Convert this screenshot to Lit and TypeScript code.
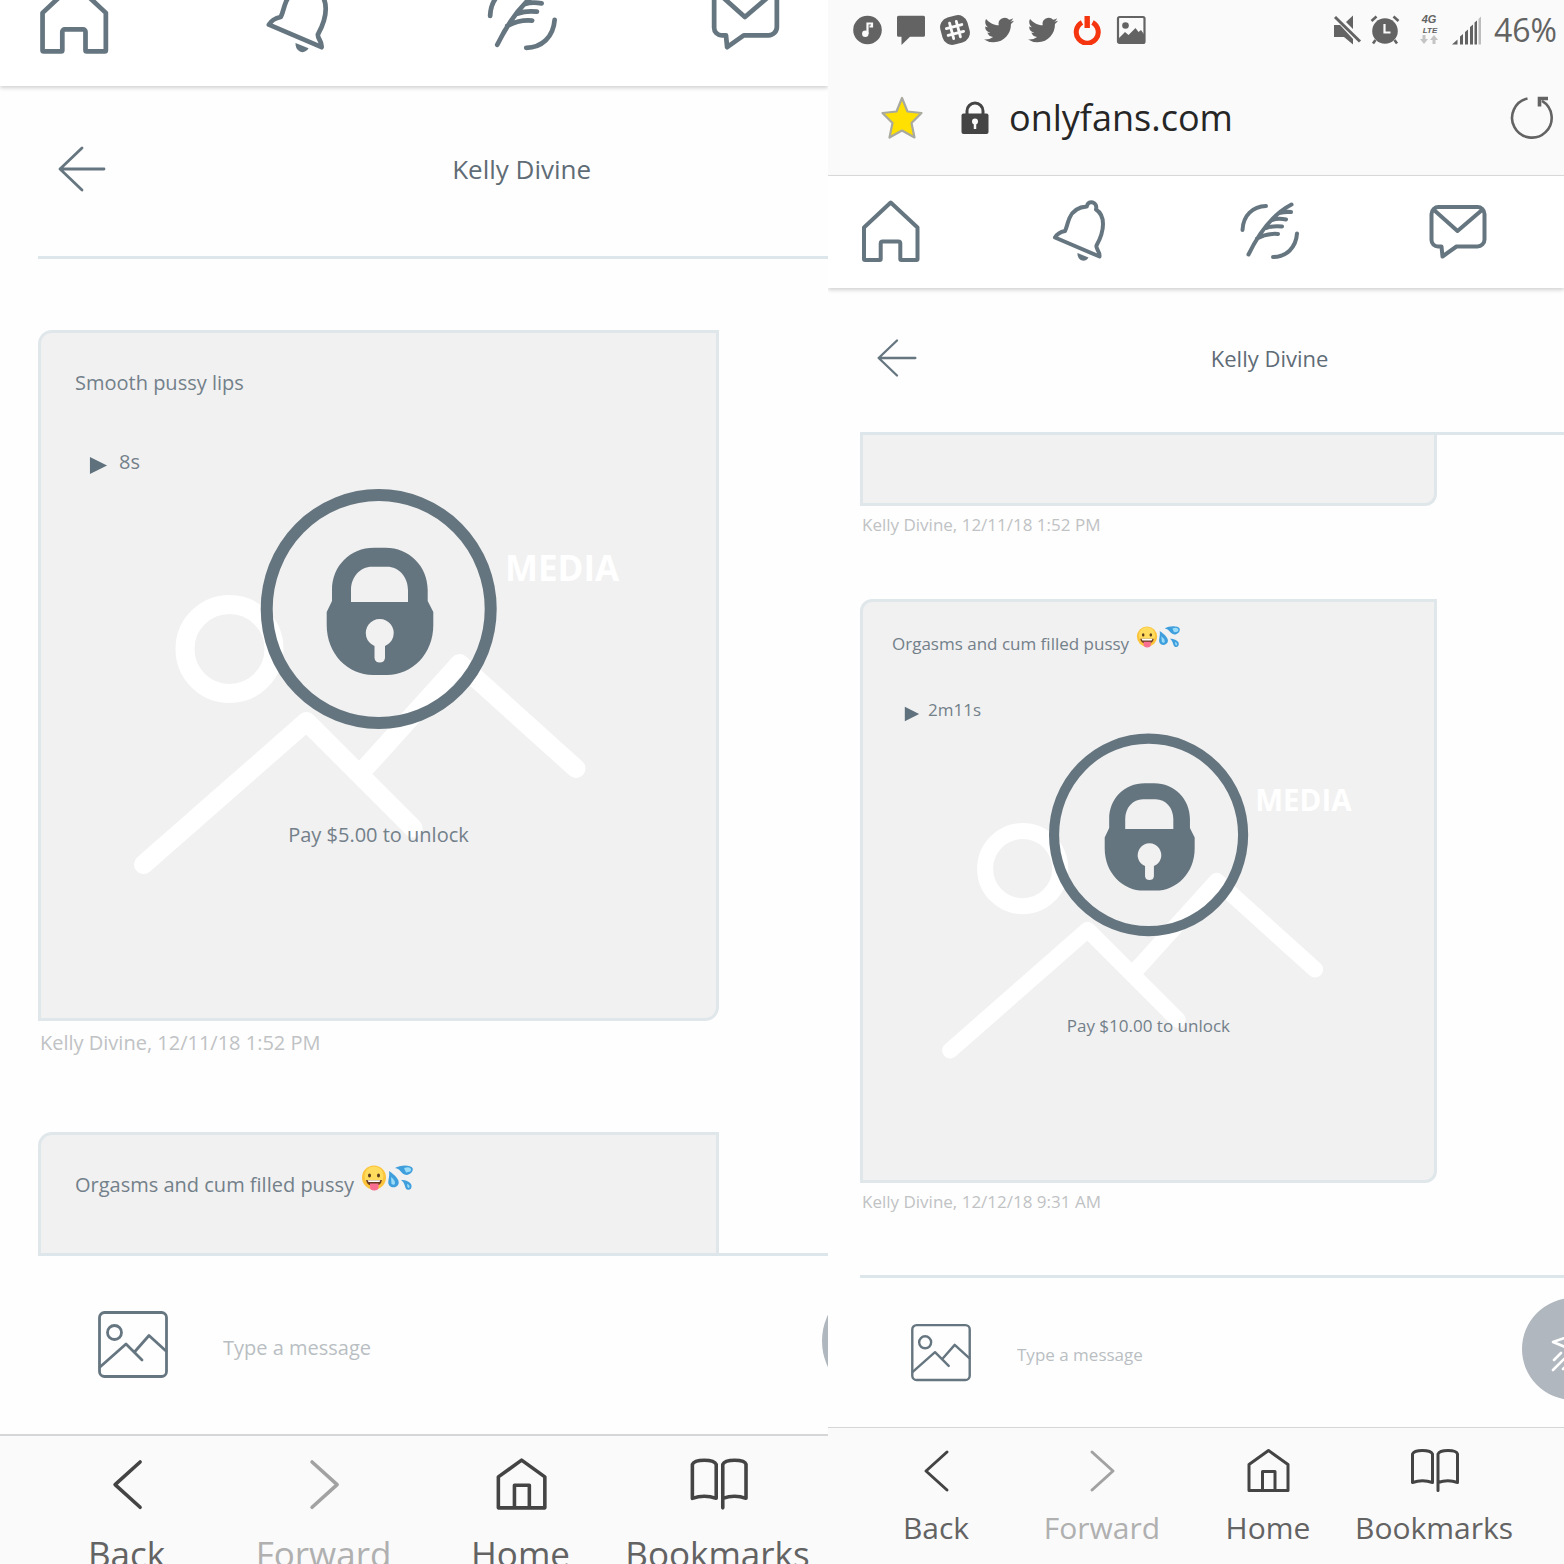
import { LitElement, html, svg, css, nothing } from "lit";
import { customElement, property } from "lit/decorators.js";
import { classMap } from "lit/directives/class-map.js";

interface Message {
  text?: string;
  emoji?: boolean;
  duration?: string;
  price?: string;
  sent?: string;
}

const LEFT: Message[] = [
  { text: "Smooth pussy lips", duration: "8s", price: "$5.00", sent: "Kelly Divine, 12/11/18 1:52 PM" },
  { text: "Orgasms and cum filled pussy", emoji: true },
];

const RIGHT: Message[] = [
  { sent: "Kelly Divine, 12/11/18 1:52 PM" },
  {
    text: "Orgasms and cum filled pussy",
    emoji: true,
    duration: "2m11s",
    price: "$10.00",
    sent: "Kelly Divine, 12/12/18 9:31 AM",
  },
];

const NAV = [
  {
    label: "Home",
    art: svg`<path d="M29.7 3.5 56.5 28.5V60a1 1 0 0 1-1 1H40.3a1 1 0 0 1-1-1V44.5a2 2 0 0 0-2-2H21.7a2 2 0 0 0-2 2V60a1 1 0 0 1-1 1H4a1 1 0 0 1-1-1V28.5Z"/>`,
  },
  {
    label: "Notifications",
    art: svg`<path d="M5 38.5 49.5 57.5C50 52 45.500 50 46.500 46.500 49 42 53 35 53 25 53 18 50 13 46 10.500 48 3 38 0 36.800 7.500 28 8 22.500 12 19.500 19 17 25 17 28 15 32 10 33 7 35 5 38.500Z"/><path class="solid" d="M27.500 54 38.500 58.500C35 64.500 27 61.500 27.500 54Z"/>`,
  },
  {
    label: "New post",
    art: svg`<path d="M27 7C14 7.500 4 16 3.500 31M52.500 5.500C34 15 21 32 9.500 55.500M52 13Q46 12.500 40 14M47 20.500Q39 19 33 21M43 27.500Q34 26.500 27 29M39 35Q28 34 18 39.500M58 34.500C57 49 47 58 34 58"/>`,
  },
  {
    label: "Messages",
    art: svg`<path d="M11 8H49a7 7 0 0 1 7.500 7V40.500a7 7 0 0 1-7 7H28.500L14.500 57.500 13.500 47.500H10a6.500 6.500 0 0 1-6.500-6.500V15a7 7 0 0 1 7.500-7ZM6 11 29.500 32 54 11"/>`,
  },
];

const TOOLS = [
  { label: "Back", off: false, art: svg`<path d="M37 5 16 24 37 43"/>` },
  { label: "Forward", off: true, art: svg`<path d="M16 5 37 24 16 43"/>` },
  {
    label: "Home",
    off: false,
    art: svg`<path d="M26.500 3.500 46 17.500V43.500H7V17.500ZM20.500 43.500V24.500H33V43.500"/>`,
  },
  {
    label: "Bookmarks",
    off: false,
    art: svg`<path d="M4.500 35.500V7Q6 3.500 14.500 3.500T24.500 7V35.500Q14.500 32 4.500 35.500ZM30 43.500V7Q31.500 3.500 40 3.500T49.500 7V35.500Q40 32 30 35.500"/>`,
  },
];

@customElement("chat-pane")
export class ChatPane extends LitElement {
  @property({ type: Boolean }) browser = false;
  @property({ attribute: false }) messages: Message[] = [];

  static styles = css`
    :host {
      display: flex;
      flex-direction: column;
      min-width: 0;
      height: 100vh;
      overflow: hidden;
      background: #fefefe;
      color: #73808a;
      font-family: "Open Sans", "Noto Sans", sans-serif;
      --page: 126%;
      --edge: 38px;
      --nav-h: 86px;
      --nav-pad: 0 47px 31px 39px;
      --nav-w: 71px;
      --nav-ih: 76px;
      --head-h: 170px;
      --arrow-x: 58px;
      --arrow: 48px;
      --title: 26px;
      --text: 20px;
      --line: 30px;
      --line-lg: 34px;
      --feed-top: 71px;
      --card-top: 33px;
      --card-x: 34px;
      --card-bottom: 138px;
      --round: 14px;
      --time-gap: 7px;
      --next: 74px;
      --play-x: 48px;
      --play-gap: 47px;
      --play: 19px;
      --play-space: 11px;
      --art: 500px;
      --pay: 30px;
      --emoji: 26px;
      --comp-h: 178px;
      --comp-pad: 0 101px 0 98px;
      --pic: 70px;
      --comp-gap: 55px;
      --send: 120px;
      --bar-h: 128px;
      --bar-pad: 20px 12px 0 28px;
      --bar-w: 62px;
      --bar-gap: 17px;
      --bar-text: 35px;
      --bar-line: 48px;
      --bar-border: 2px;
    }
    :host([browser]) {
      --page: 120%;
      --edge: 32px;
      --nav-h: 112px;
      --nav-pad: 0 76px 25px 33px;
      --nav-w: 60px;
      --nav-ih: 64px;
      --head-h: 144px;
      --arrow-x: 49px;
      --arrow: 40px;
      --title: 22px;
      --text: 17px;
      --line: 26px;
      --line-lg: 30px;
      --feed-top: 0px;
      --card-top: 27px;
      --card-x: 29px;
      --card-bottom: 116px;
      --round: 12px;
      --time-gap: 6px;
      --next: 61px;
      --play-x: 41px;
      --play-gap: 38px;
      --play: 16px;
      --play-space: 8px;
      --art: 422px;
      --pay: 25px;
      --emoji: 22px;
      --comp-h: 149px;
      --comp-pad: 0 87px 0 83px;
      --pic: 60px;
      --comp-gap: 46px;
      --send: 102px;
      --bar-h: 136px;
      --bar-pad: 19px 47px 0 25px;
      --bar-w: 52px;
      --bar-gap: 13px;
      --bar-text: 30px;
      --bar-line: 40px;
      --bar-border: 1px;
    }
    * {
      box-sizing: border-box;
    }
    button,
    input {
      font: inherit;
      color: inherit;
      border: 0;
      padding: 0;
      margin: 0;
      background: none;
      min-width: 0;
    }
    svg {
      display: block;
      flex: none;
    }
    .chrome {
      flex: none;
      background: #fafafa;
      border-bottom: 1px solid #dcdcdc;
      color: #636363;
    }
    .status {
      display: flex;
      align-items: center;
      justify-content: space-between;
      height: 60px;
      padding: 0 7px 0 24px;
    }
    .group {
      display: flex;
      align-items: center;
      gap: 14px;
    }
    .group.right {
      gap: 8px;
    }
    .network {
      margin-left: 6px;
      font: italic 700 11px "Liberation Sans", sans-serif;
    }
    .lte {
      font-size: 8px;
    }
    .battery {
      margin-left: 4px;
      font-size: 32px;
      line-height: 40px;
    }
    .address {
      display: flex;
      align-items: center;
      height: 115px;
      padding: 0 10px 0 52px;
    }
    .secure {
      margin: 0 20px 0 37px;
    }
    .url {
      flex: 1;
      font-size: 36px;
      line-height: 48px;
      color: #262626;
      outline: 0;
    }
    .nav {
      flex: none;
      display: flex;
      align-items: flex-end;
      justify-content: space-between;
      height: var(--nav-h);
      padding: var(--nav-pad);
      background: #fff;
      box-shadow: 0 2px 4px rgba(0, 0, 0, 0.18);
      position: relative;
    }
    .nav svg {
      width: var(--nav-w);
      height: var(--nav-ih);
      fill: none;
      stroke: #667680;
      stroke-width: 4;
      stroke-linecap: round;
      stroke-linejoin: round;
    }
    .nav .solid {
      fill: #667680;
      stroke: none;
    }
    .page {
      flex: 1;
      min-height: 0;
      display: flex;
      flex-direction: column;
      width: var(--page);
    }
    .head {
      flex: none;
      display: grid;
      align-items: center;
      height: var(--head-h);
      padding: 0 0 4px;
    }
    .head > * {
      grid-area: 1 / 1;
    }
    .head h1 {
      margin: 0;
      text-align: center;
      font-weight: 400;
      font-size: var(--title);
      line-height: 36px;
      color: #5f6c76;
    }
    .back {
      justify-self: start;
      margin-left: var(--arrow-x);
    }
    .back svg {
      width: var(--arrow);
      height: var(--arrow);
    }
    .outline {
      fill: none;
      stroke: #667680;
      stroke-linecap: round;
      stroke-linejoin: round;
    }
    .feed {
      flex: 1;
      min-height: 0;
      overflow: hidden;
      margin-left: var(--edge);
      padding: var(--feed-top) var(--edge) 0 0;
      border-top: 3px solid #dde6ea;
      border-bottom: 3px solid #dde6ea;
    }
    .card {
      width: 70.4%;
      padding: var(--card-top) 0 var(--card-bottom);
      background: #f1f1f1;
      border: 3px solid #e0e7eb;
      border-radius: var(--round) 0 var(--round) 0;
    }
    .card.tail {
      height: 71px;
      padding: 0;
      border-top: 0;
      border-radius: 0 0 var(--round) 0;
    }
    .text {
      display: flex;
      align-items: center;
      height: var(--line-lg);
      margin: 0;
      padding: 0 var(--card-x);
      font-size: var(--text);
      line-height: var(--line-lg);
    }
    .emoji {
      width: var(--emoji);
      height: var(--emoji);
      margin-bottom: 14px;
    }
    .emoji.first {
      margin-left: 7px;
    }
    .length {
      display: flex;
      align-items: center;
      gap: var(--play-space);
      margin-top: var(--play-gap);
      padding-left: var(--play-x);
      font-size: var(--text);
      line-height: var(--line);
    }
    .length svg {
      width: var(--play);
      height: var(--play);
      margin-top: 7px;
      fill: #5f717c;
    }
    .media {
      display: grid;
      justify-items: center;
      margin-top: 3px;
    }
    .media > * {
      grid-area: 1 / 1;
    }
    .media svg {
      width: var(--art);
      max-width: 100%;
    }
    .word {
      font: 700 35px "Open Sans", sans-serif;
      fill: #fff;
    }
    .pay {
      align-self: end;
      margin-bottom: var(--pay);
      font-size: var(--text);
      line-height: var(--line);
    }
    .time {
      display: block;
      margin: var(--time-gap) 0 var(--next) 2px;
      font-size: var(--text);
      line-height: var(--line);
      color: #c0c2c4;
    }
    .composer {
      flex: none;
      display: flex;
      align-items: center;
      height: var(--comp-h);
      padding: var(--comp-pad);
    }
    .pic svg {
      width: var(--pic);
      height: var(--pic);
    }
    .entry {
      flex: 1;
      margin: 5px 0 0 var(--comp-gap);
      font-size: var(--text);
      line-height: var(--line);
      outline: 0;
    }
    .entry::placeholder {
      color: #b9bec3;
      opacity: 1;
    }
    .send {
      flex: none;
      margin-bottom: 8px;
    }
    .send svg {
      width: var(--send);
      height: var(--send);
    }
    .bar {
      flex: none;
      display: grid;
      grid-template-columns: repeat(4, 1fr);
      height: calc(var(--bar-h) + var(--bar-border));
      padding: var(--bar-pad);
      background: #fafafa;
      border-top: var(--bar-border) solid #d4d6d7;
      color: #636363;
      font-size: var(--bar-text);
      line-height: var(--bar-line);
    }
    .tool {
      display: flex;
      flex-direction: column;
      align-items: center;
      align-self: start;
      gap: var(--bar-gap);
    }
    .tool svg {
      width: var(--bar-w);
      fill: none;
      stroke: #444;
      stroke-width: 3;
      stroke-linecap: round;
      stroke-linejoin: round;
    }
    .tool.off {
      color: #b0b0b0;
    }
    .tool.off svg {
      stroke: #a2a2a2;
    }
  `;

  private bird() {
    return html`<svg width="30" height="30" viewBox="0 0 24 24" fill="currentColor">
      <path d="M23.953 4.57a10 10 0 01-2.825.775 4.958 4.958 0 002.163-2.723c-.951.555-2.005.959-3.127 1.184a4.92 4.92 0 00-8.384 4.482C7.69 8.095 4.067 6.13 1.64 3.162a4.822 4.822 0 00-.666 2.475c0 1.71.87 3.213 2.188 4.096a4.904 4.904 0 01-2.228-.616v.06a4.923 4.923 0 003.946 4.827 4.996 4.996 0 01-2.212.085 4.936 4.936 0 004.604 3.417 9.867 9.867 0 01-6.102 2.105c-.39 0-.779-.023-1.17-.067a13.995 13.995 0 007.557 2.209c9.053 0 13.998-7.496 13.998-13.985 0-.21 0-.42-.015-.63A9.935 9.935 0 0024 4.59z" />
    </svg>`;
  }

  private chrome() {
    return html`<div class="chrome">
      <div class="status">
        <div class="group">
          <svg width="30" height="30" viewBox="0 0 30 30">
            <circle cx="15.500" cy="15" r="14.300" fill="currentColor" />
            <path d="M15.500 19V8.500h4.500v3h-2.500" fill="none" stroke="#fafafa" stroke-width="2.200" />
            <circle cx="13.300" cy="18.800" r="3.200" fill="#fafafa" />
          </svg>
          <svg width="30" height="30" viewBox="0 0 30 30" fill="currentColor">
            <path d="M2.500.8h25a1.500 1.500 0 0 1 1.500 1.500v18a1.500 1.500 0 0 1-1.500 1.500H14L5.500 30V21.800h-3A1.500 1.500 0 0 1 1 20.300v-18A1.500 1.500 0 0 1 2.500.8Z" />
          </svg>
          <svg width="30" height="30" viewBox="0 0 30 30">
            <g transform="rotate(-15 15 15)">
              <rect x="1" y="1" width="28" height="28" rx="10" fill="currentColor" />
              <path d="M11.500 7v16M18.500 7v16M7 11.500h16M7 18.500h16" stroke="#fafafa" stroke-width="2.800" stroke-linecap="round" />
            </g>
          </svg>
          ${this.bird()} ${this.bird()}
          <svg width="30" height="30" viewBox="0 0 30 30" fill="none" stroke="#f5350f">
            <path d="M10 7.500A11 11 0 1 0 20.500 7.500" stroke-width="5" />
            <path d="M15.200 1V13" stroke-width="5.400" />
          </svg>
          <svg width="30" height="30" viewBox="0 0 30 30">
            <rect x="2" y="2" width="26.500" height="26" rx="1.500" fill="none" stroke="currentColor" stroke-width="2.200" />
            <circle cx="9.500" cy="10.500" r="3.300" fill="currentColor" />
            <path d="M3 23 9 17l3.500 3 7-7 3 4 2.500-2 3.500 5V28H3Z" fill="currentColor" />
          </svg>
        </div>
        <div class="group right">
          <svg width="28" height="30" viewBox="0 0 28 30" fill="currentColor">
            <path d="M0 10H6L19 24V29.500L10 22H0ZM12 7 19 .5V14Z" />
            <path d="M1 2 26 26.500" stroke="currentColor" stroke-width="3" />
          </svg>
          <svg width="30" height="30" viewBox="0 0 30 30">
            <circle cx="15" cy="16" r="12.800" fill="currentColor" />
            <path d="M5.500 25 3 28.500M24.500 25l2.500 3.500M1.500 6 6.500 1.500M28.500 6l-5-4.500" stroke="currentColor" stroke-width="2.600" />
            <path d="M14.500 9v8.500h6" stroke="#fafafa" stroke-width="2.200" fill="none" />
          </svg>
          <svg class="network" width="30" height="30" viewBox="0 0 30 30" fill="currentColor">
            <text x="15" y="8" text-anchor="middle">4G</text>
            <text class="lte" x="16" y="18" text-anchor="middle">LTE</text>
            <path d="M8.500 20h3v4h2.500l-4 5-4-5h2.500ZM18.500 29h3v-4h2.500l-4-5-4 5h2.500Z" fill="#c4c4c4" />
          </svg>
          <svg width="30" height="30" viewBox="0 0 30 30" fill="currentColor">
            <path d="M0 29.500 5.500 24.500V29.500ZM8 21.500l3-2.500V29.500H8ZM13 17l3-2.500V29.500H13ZM18 12l3-2.500V29.500H18ZM22.500 7.500l2.500-2V29.500H22.500Z" />
            <path d="M26.500 4 29 1.500V29.500H26.500Z" fill="#bdbdbd" />
          </svg>
          <span class="battery">46%</span>
        </div>
      </div>
      <div class="address">
        <button aria-label="Bookmark this page">
          <svg width="44" height="44" viewBox="0 0 44 44">
            <path d="M22 2 27.500 15.500 41.500 17 31.500 27 34.500 41.500 22 34.500 9.500 41.500 12.500 27 2.500 17 16.500 15.500Z" fill="#ffe000" stroke="#a9a9a0" stroke-width="2.200" stroke-linejoin="round" />
          </svg>
        </button>
        <svg class="secure" width="28" height="34" viewBox="0 0 28 34">
          <path d="M6 14V10a8 8 0 0 1 16 0v4" fill="none" stroke="#444" stroke-width="3" />
          <rect x=".5" y="12.500" width="27" height="20.500" rx="2" fill="#444" />
          <circle cx="14" cy="20.500" r="3" fill="#fafafa" />
          <path d="M14 21v7" stroke="#fafafa" stroke-width="2.500" />
        </svg>
        <input class="url" aria-label="Address" .value=${"onlyfans.com"} />
        <button aria-label="Reload">
          <svg width="44" height="44" viewBox="0 0 44 44" fill="none" stroke="#636363" stroke-width="2.600">
            <path d="M17.500 2.500A19.800 19.800 0 1 0 32 4.800" />
            <path d="M38 2.500H29.500V10.500" stroke-width="3.600" />
          </svg>
        </button>
      </div>
    </div>`;
  }

  private emojis() {
    return html`<svg class="emoji first" viewBox="0 0 26 26" role="img" aria-label="😛">
        <circle cx="13" cy="12.500" r="12" fill="#fcc43c" />
        <circle cx="13" cy="11" r="9.500" fill="#ffdc5e" />
        <ellipse cx="8.500" cy="10.500" rx="1.500" ry="2" fill="#5b3c1c" />
        <ellipse cx="17.500" cy="10.500" rx="1.500" ry="2" fill="#5b3c1c" />
        <path d="M5 15H21Q20 21 13 21T5 15Z" fill="#6b3a20" />
        <path d="M6.500 15.200H19.500L18.500 17H7.500Z" fill="#fff" />
        <path d="M9 18.500H17.500V22a4.200 3.500 0 0 1-8.500 0Z" fill="#f86f92" />
      </svg>
      <svg class="emoji" viewBox="0 0 26 26" role="img" aria-label="💦">
        <path d="M8 3C13-.5 24-.5 25.500 3S22 11.500 17.500 9.500 14 4 8 3Z" fill="#3f9fdd" />
        <path d="M17 3Q23 1 24 4T19 7.500Z" fill="#9bdcf8" />
        <path d="M2 6C8 10 13 15 11.500 19S4 23.500 2 20 3 13 2 6Z" fill="#3f9fdd" />
        <path d="M4 12Q8 15 8 18T4.500 19Z" fill="#9bdcf8" />
        <path d="M14 15C19 15 24 17 24.500 20.500S22.500 25.500 20 24.500 18.500 18 14 15Z" fill="#3f9fdd" />
        <path d="M20 19Q23 20 22.500 22T20.500 22Z" fill="#9bdcf8" />
      </svg>`;
  }

  private card(m: Message) {
    return html`<article>
      <div class=${classMap({ card: true, tail: !m.text })}>
        ${m.text ? html`<p class="text">${m.text}${m.emoji ? this.emojis() : nothing}</p>` : nothing}
        ${m.duration
          ? html`<div class="length">
                <svg viewBox="0 0 20 20"><path d="M1 1 19 10 1 19Z" /></svg>
                <span>${m.duration}</span>
              </div>
              <div class="media">
                <svg viewBox="0 0 500 400">
                  <g fill="none" stroke="#fff" stroke-width="19" stroke-linecap="round" stroke-linejoin="round">
                    <circle cx="101.500" cy="169" r="44.500" />
                    <path d="M15.500 384.500 178.500 241.500 285 348" />
                    <path d="M238 287 331.500 183.500 448 288.500" />
                  </g>
                  <text class="word" x="377" y="101">MEDIA</text>
                  <ellipse cx="250.700" cy="129" rx="112" ry="114" fill="none" stroke="#65757f" stroke-width="12" />
                  <path
                    fill="#65757f"
                    fill-rule="evenodd"
                    d="M204 121V110C204 86 222 67.700 246 67.700H257.500C281 67.700 299.700 86 299.700 110V121L305.300 132V145C305.300 174 284 195 259 195H245C220 195 198.700 174 198.700 145V132ZM223 122H280V110C280 97 271 86.700 259 86.700H244C232 86.700 223 97 223 110ZM246.500 166V178a5.300 5.300 0 0 0 10.500 0V166A14 14 0 1 0 246.500 166Z"
                  />
                </svg>
                <button class="pay">Pay ${m.price} to unlock</button>
              </div>`
          : nothing}
      </div>
      ${m.sent ? html`<time class="time">${m.sent}</time>` : nothing}
    </article>`;
  }

  render() {
    return html`
      ${this.browser ? this.chrome() : nothing}
      <nav class="nav">
        ${NAV.map(
          (n) => html`<button aria-label=${n.label}><svg viewBox="0 0 60 64">${n.art}</svg></button>`
        )}
      </nav>
      <div class="page">
        <header class="head">
          <h1>Kelly Divine</h1>
          <button class="back" aria-label="Back to chats">
            <svg class="outline" viewBox="0 0 48 48" stroke-width="2.800"><path d="M46 24H2M24 3 2 24 24 45" /></svg>
          </button>
        </header>
        <main class="feed">${this.messages.map((m) => this.card(m))}</main>
        <form class="composer" @submit=${(e: Event) => e.preventDefault()}>
          <button class="pic" type="button" aria-label="Add media">
            <svg class="outline" viewBox="0 0 70 70" stroke-width="2.800">
              <rect x="1.500" y="2.500" width="67" height="64" rx="5" />
              <circle cx="16.500" cy="22.500" r="7" />
              <path d="M2 57 28 34 44 50M36.500 42 51 25.500 68 41" />
            </svg>
          </button>
          <input class="entry" aria-label="Message" placeholder="Type a message" />
          <button class="send" aria-label="Send">
            <svg viewBox="0 0 102 102">
              <circle cx="51" cy="51" r="51" fill="#b0b7be" />
              <path d="M74 29 31 44 48 51 57 73ZM74 29 48 51M32 62 39 55M31 72 43 60M41 71 50 62" fill="none" stroke="#fff" stroke-width="2.600" stroke-linecap="round" stroke-linejoin="round" />
            </svg>
          </button>
        </form>
      </div>
      <footer class="bar">
        ${TOOLS.map(
          (t) => html`<button class=${classMap({ tool: true, off: t.off })} ?disabled=${t.off}>
            <svg viewBox="0 0 52 48">${t.art}</svg>
            <span>${t.label}</span>
          </button>`
        )}
      </footer>
    `;
  }
}

@customElement("app-root")
export class AppRoot extends LitElement {
  static styles = css`
    :host {
      display: grid;
      grid-template-columns: 828fr 736fr;
      height: 100vh;
      overflow: hidden;
    }
  `;

  render() {
    return html`
      <chat-pane .messages=${LEFT}></chat-pane>
      <chat-pane browser .messages=${RIGHT}></chat-pane>
    `;
  }
}
